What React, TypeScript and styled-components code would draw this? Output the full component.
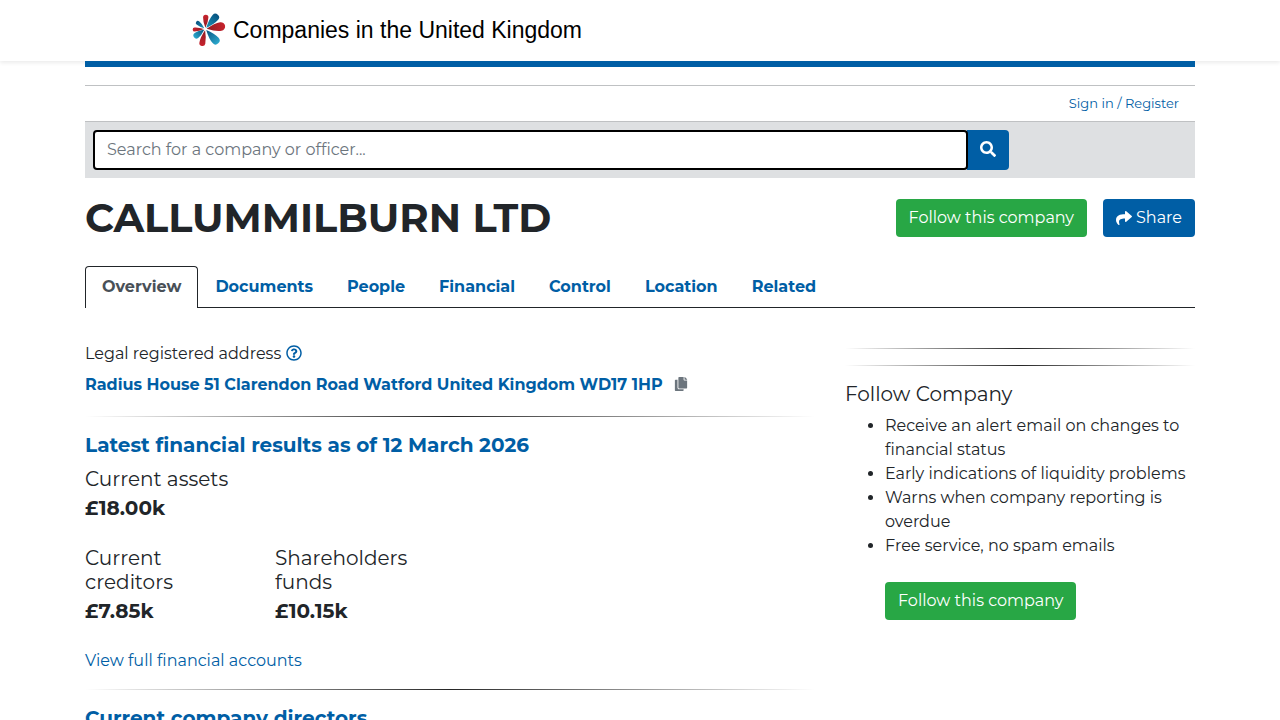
import React from "react";
import styled, { createGlobalStyle, css } from "styled-components";
import { FaCopy, FaRegQuestionCircle, FaSearch, FaShare } from "react-icons/fa";

const blue = "#005ea5";
const ink = "#212529";

const GlobalStyle = createGlobalStyle`
  *, *::before, *::after { box-sizing: border-box; }
  body {
    margin: 0;
    background: #fff;
    color: ${ink};
    font-family: Montserrat, Inter, "Open Sans", sans-serif;
    font-size: 16px;
    line-height: 24px;
    font-variant-ligatures: none;
    overflow-x: hidden;
  }
  a { color: ${blue}; text-decoration: none; }
`;

const Header = styled.header`
  height: 61px;
  background: #fff;
  box-shadow: 0 2px 4px rgba(0, 0, 0, 0.08);
`;

const Container = styled.div`
  width: 100%;
  max-width: 1140px;
  margin: 0 auto;
  padding: 0 15px;
`;

const Brand = styled.a`
  display: inline-flex;
  align-items: center;
  gap: 7px;
  height: 60px;
  margin-left: 107px;
  color: #000;
  font: 23px/30px "Liberation Sans", Arial, sans-serif;

  svg { display: block; }
`;

const Page = styled(Container)`
  position: relative;
`;

const BlueBar = styled.div`
  height: 6px;
  margin-bottom: 18px;
  background: ${blue};
`;

const AccountBar = styled.nav`
  display: flex;
  justify-content: flex-end;
  align-items: center;
  height: 37px;
  padding: 0 16px 2px;
  border: solid #bfc1c3;
  border-width: 1px 0;
  font-size: 13px;
`;

const SearchBar = styled.form`
  display: flex;
  padding: 8px;
  background: #dee0e2;
`;

const SearchInput = styled.input`
  position: relative;
  z-index: 1;
  flex: 0 1 875px;
  min-width: 0;
  height: 40px;
  padding: 0 12px 2px;
  border: 2px solid #000;
  border-radius: 4px;
  outline: 0;
  background: #fff;
  color: #495057;
  font: inherit;
  font-variant-ligatures: none;

  &::placeholder { color: #6c757d; opacity: 1; }
`;

const Button = styled.button<{ $tone: "green" | "blue" }>`
  display: inline-flex;
  align-items: center;
  justify-content: center;
  gap: 4px;
  height: 38px;
  padding: 0 12px;
  border: 1px solid transparent;
  border-radius: 4px;
  background: ${(p) => (p.$tone === "green" ? "#28a745" : blue)};
  background-clip: border-box;
  color: #fff;
  font: inherit;
  white-space: nowrap;
  cursor: pointer;
`;

const SearchButton = styled(Button)`
  width: 42px;
  height: 40px;
  margin-left: -1px;
  padding-bottom: 2px;
  border-radius: 0 4px 4px 0;
`;

const TitleRow = styled.div`
  display: flex;
  align-items: center;
  gap: 16px;
  min-height: 48px;
  margin: 16px 0 24px;
`;

const Title = styled.h1`
  flex: 1;
  margin: 0;
  font-size: 40px;
  line-height: 48px;
  font-weight: 700;
`;

const Tabs = styled.nav`
  display: flex;
  border-bottom: 1px solid ${ink};
`;

const Tab = styled.a<{ $active?: boolean }>`
  padding: 8px 16px;
  border: 1px solid transparent;
  border-bottom: 0;
  border-radius: 4px 4px 0 0;
  font-weight: 700;
  ${(p) =>
    p.$active &&
    css`
      margin-bottom: -1px;
      padding-bottom: 9px;
      border-color: ${ink};
      background: #fff;
      color: #495057;
    `}
`;

const Columns = styled.div`
  display: grid;
  grid-template-columns: minmax(0, 2fr) minmax(0, 1fr);
  margin: 33px -15px 0;
`;

const Main = styled.main`
  padding: 0 15px;
`;

const Side = styled.aside`
  padding: 7px 15px 0;
`;

const Rule = styled.hr`
  height: 1px;
  margin: 0 0 16px;
  border: 0;
  background: linear-gradient(to right, transparent, rgba(0, 0, 0, 0.85), transparent);
`;

const Address = styled.div`
  padding-top: 1px;
  margin-bottom: 19px;
`;

const AddressLabel = styled.p`
  display: flex;
  align-items: center;
  gap: 5px;
  margin: 0 0 7px;

  a { display: flex; padding-bottom: 2px; }
`;

const AddressLine = styled.p`
  display: flex;
  align-items: center;
  gap: 11px;
  margin: 0;
  font-weight: 700;
`;

const IconButton = styled.button`
  display: flex;
  padding: 0 0 2px;
  border: 0;
  background: none;
  color: #6c757d;
  cursor: pointer;
`;

const SectionHeading = styled.h2`
  margin: 0 0 10px;
  color: ${blue};
  font-size: 20px;
  line-height: 24px;
  font-weight: 700;
`;

const Figures = styled.dl`
  display: grid;
  grid-template-columns: repeat(4, 1fr);
  margin: 0 -30px 26px 0;
  row-gap: 26px;
`;

const Figure = styled.div<{ $wide?: boolean }>`
  grid-column: ${(p) => (p.$wide ? "1 / -1" : "auto")};
  padding-right: 30px;
  font-size: 20px;

  dt { margin-bottom: 5px; }
  dd { margin: 0; font-weight: 700; }
`;

const AccountsLink = styled.p`
  margin: 0 0 16px;
`;

const SideHeading = styled.h2`
  margin: 0 0 8px;
  font-size: 20px;
  line-height: 24px;
  font-weight: 400;
`;

const Benefits = styled.ul`
  margin: 0 0 24px;
  padding-left: 40px;
`;

const FollowArea = styled.div`
  padding-left: 40px;
`;

const petals = [
  { angle: -49, length: 57, radius: 11, fill: "url(#petalBlue)" },
  { angle: -9, length: 60, radius: 13, fill: "url(#petalRed)" },
  { angle: 48, length: 58, radius: 12, fill: "url(#petalCyan)" },
  { angle: 102, length: 52, radius: 9, fill: "url(#petalRed)" },
  { angle: 144, length: 42, radius: 9, fill: "url(#petalCyan)" },
  { angle: 177, length: 38, radius: 6, fill: "url(#petalRed)" },
  { angle: 219, length: 35, radius: 6, fill: "url(#petalBlue)" },
  { angle: 272, length: 43, radius: 8, fill: "url(#petalRed)" },
];

const Logo = () => (
  <svg width="34" height="34" viewBox="12 15 102 102" aria-hidden="true">
    <defs>
      <linearGradient id="petalBlue" x1="0" x2="1">
        <stop offset="0" stopColor="#1b93b8" />
        <stop offset="1" stopColor="#07517f" />
      </linearGradient>
      <linearGradient id="petalCyan" x1="0" x2="1">
        <stop offset="0" stopColor="#07527f" />
        <stop offset="1" stopColor="#2ba9cd" />
      </linearGradient>
      <linearGradient id="petalRed" x1="0" x2="1">
        <stop offset="0" stopColor="#8f1d24" />
        <stop offset="1" stopColor="#c8222d" />
      </linearGradient>
    </defs>
    {petals.map(({ angle, length, radius, fill }) => (
      <path
        key={angle}
        fill={fill}
        transform={`translate(52 63) rotate(${angle})`}
        d={`M4 0 Q${length / 2} ${-radius} ${length - radius} ${-radius} A${radius} ${radius} 0 0 1 ${length - radius} ${radius} Q${length / 2} ${radius} 4 0Z`}
      />
    ))}
  </svg>
);

const tabs = ["Overview", "Documents", "People", "Financial", "Control", "Location", "Related"];

export default function App() {
  return (
    <>
      <GlobalStyle />
      <Header>
        <Container>
          <Brand href="#">
            <Logo />
            Companies in the United Kingdom
          </Brand>
        </Container>
      </Header>
      <Page>
        <BlueBar />
        <AccountBar aria-label="Account">
          <a href="#signin">Sign in / Register</a>
        </AccountBar>
        <SearchBar role="search" onSubmit={(e) => e.preventDefault()}>
          <SearchInput
            type="text"
            aria-label="Search for a company or officer"
            placeholder="Search for a company or officer..."
          />
          <SearchButton $tone="blue" type="submit" aria-label="Search">
            <FaSearch size={16} />
          </SearchButton>
        </SearchBar>
        <TitleRow>
          <Title>CALLUMMILBURN LTD</Title>
          <Button $tone="green" type="button">Follow this company</Button>
          <Button $tone="blue" type="button">
            <FaShare size={16} />
            Share
          </Button>
        </TitleRow>
        <Tabs aria-label="Company sections">
          {tabs.map((name, i) => (
            <Tab key={name} href={`#${name.toLowerCase()}`} $active={i === 0}>
              {name}
            </Tab>
          ))}
        </Tabs>
        <Columns>
          <Main>
            <Address>
              <AddressLabel>
                Legal registered address
                <a href="#help" aria-label="About the registered address">
                  <FaRegQuestionCircle size={16} />
                </a>
              </AddressLabel>
              <AddressLine>
                <a href="#location">Radius House 51 Clarendon Road Watford United Kingdom WD17 1HP</a>
                <IconButton type="button" aria-label="Copy address">
                  <FaCopy size={14} />
                </IconButton>
              </AddressLine>
            </Address>
            <Rule />
            <SectionHeading>Latest financial results as of 12 March 2026</SectionHeading>
            <Figures>
              <Figure $wide>
                <dt>Current assets</dt>
                <dd>£18.00k</dd>
              </Figure>
              <Figure>
                <dt>Current creditors</dt>
                <dd>£7.85k</dd>
              </Figure>
              <Figure>
                <dt>Shareholders funds</dt>
                <dd>£10.15k</dd>
              </Figure>
            </Figures>
            <AccountsLink>
              <a href="#financial">View full financial accounts</a>
            </AccountsLink>
            <Rule />
            <SectionHeading>Current company directors</SectionHeading>
          </Main>
          <Side>
            <Rule />
            <Rule />
            <SideHeading>Follow Company</SideHeading>
            <Benefits>
              <li>Receive an alert email on changes to financial status</li>
              <li>Early indications of liquidity problems</li>
              <li>Warns when company reporting is overdue</li>
              <li>Free service, no spam emails</li>
            </Benefits>
            <FollowArea>
              <Button $tone="green" type="button">Follow this company</Button>
            </FollowArea>
          </Side>
        </Columns>
      </Page>
    </>
  );
}
